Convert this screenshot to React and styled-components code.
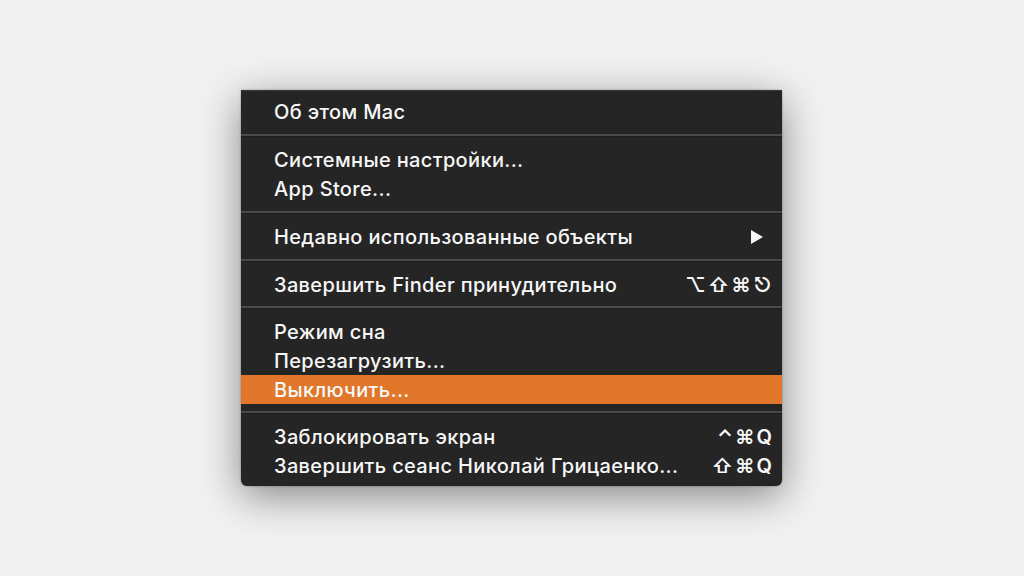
import React from 'react'
import styled, { createGlobalStyle } from 'styled-components'

const Global = createGlobalStyle`
  html, body {
    margin: 0;
    padding: 0;
    background: #f1f1f1;
  }
`

const Page = styled.div`
  height: 100vh;
  display: flex;
  align-items: center;
  justify-content: center;
  font-family: Inter, "Liberation Sans", sans-serif;
`

const Menu = styled.div`
  width: 541px;
  background: #252525;
  border-top: 1px solid #3a3a3a;
  border-radius: 0 0 6px 6px;
  box-shadow: 0 10px 40px rgba(0, 0, 0, 0.45), 0 0 2px rgba(0, 0, 0, 0.4);
  margin-left: -1px;
`

const Group = styled.div`
  padding: ${p => p.pt}px 0 ${p => p.pb}px;
`

const Separator = styled.div`
  height: 2px;
  background: #4a4a4a;
  border-bottom: 1px solid #1e1e1e;
`

const Row = styled.div`
  height: 29px;
  display: flex;
  align-items: center;
  justify-content: space-between;
  padding: 0 ${p => p.pr || 10}px 0 33px;
  color: #f7f7f7;
  font-size: 20px;
  font-weight: 500;
  letter-spacing: 0.35px;
  background: ${p => (p.active ? '#e0772a' : 'transparent')};
`

const Shortcut = styled.span`
  font-family: Inter, "DejaVu Sans", sans-serif;
  font-size: 20px;
  font-weight: 600;
  letter-spacing: 2px;
  margin-right: -2px;
  color: #f7f7f7;
`

const Arrow = styled.span`
  width: 0;
  height: 0;
  border-top: 7px solid transparent;
  border-bottom: 7px solid transparent;
  border-left: 12px solid #f7f7f7;
`

const groups = [
  { pt: 6, pb: 8, items: [{ label: 'Об этом Mac' }] },
  { pt: 8, pb: 8, items: [{ label: 'Системные настройки...' }, { label: 'App Store...' }] },
  { pt: 8, pb: 8, items: [{ label: 'Недавно использованные объекты', arrow: true }] },
  { pt: 8, pb: 7, items: [{ label: 'Завершить Finder принудительно', keys: '⌥⇧⌘⎋' }] },
  {
    pt: 8,
    pb: 7,
    items: [{ label: 'Режим сна' }, { label: 'Перезагрузить...' }, { label: 'Выключить...', active: true }]
  },
  {
    pt: 8,
    pb: 6,
    items: [
      { label: 'Заблокировать экран', keys: '⌃⌘Q' },
      { label: 'Завершить сеанс Николай Грицаенко...', keys: '⇧⌘Q' }
    ]
  }
]

export default function App() {
  return (
    <Page>
      <Global />
      <Menu>
        {groups.map((g, i) => (
          <React.Fragment key={i}>
            {i > 0 && <Separator />}
            <Group pt={g.pt} pb={g.pb}>
              {g.items.map(item => (
                <Row key={item.label} active={item.active} pr={item.arrow ? 19 : 10}>
                  <span>{item.label}</span>
                  {item.keys && <Shortcut>{item.keys}</Shortcut>}
                  {item.arrow && <Arrow />}
                </Row>
              ))}
            </Group>
          </React.Fragment>
        ))}
      </Menu>
    </Page>
  )
}
